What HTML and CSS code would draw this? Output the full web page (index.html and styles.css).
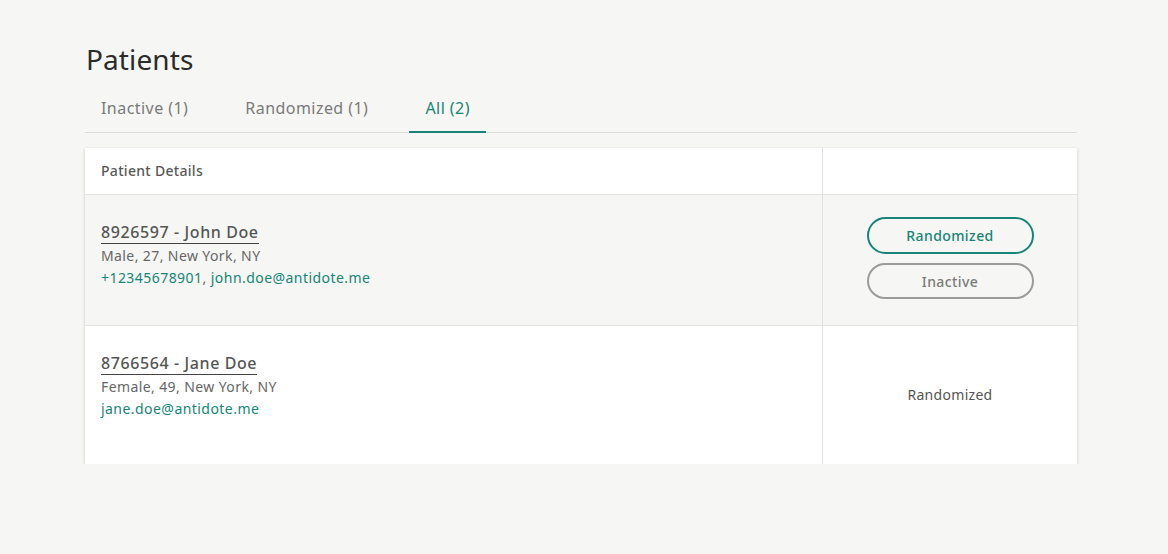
FILE: index.html
```html
<!DOCTYPE html>
<html>
<head>
<meta charset="utf-8">
<link rel="stylesheet" href="styles.css">
</head>
<body>
<main class="page">
  <h1 class="title">Patients</h1>
  <nav class="tabs">
    <a class="tab">Inactive (1)</a>
    <a class="tab">Randomized (1)</a>
    <a class="tab active">All (2)</a>
  </nav>
  <section class="card">
    <div class="row head">
      <div class="cell main">Patient Details</div>
      <div class="cell side"></div>
    </div>
    <div class="row r1 highlighted">
      <div class="cell main">
        <a class="name">8926597 - John Doe</a>
        <div class="meta">Male, 27, New York, NY</div>
        <div class="contact"><span class="link">+12345678901</span>, <span class="link">john.doe@antidote.me</span></div>
      </div>
      <div class="cell side buttons">
        <button class="pill primary">Randomized</button>
        <button class="pill secondary">Inactive</button>
      </div>
    </div>
    <div class="row r2">
      <div class="cell main">
        <a class="name">8766564 - Jane Doe</a>
        <div class="meta">Female, 49, New York, NY</div>
        <div class="contact"><span class="link">jane.doe@antidote.me</span></div>
      </div>
      <div class="cell side status">Randomized</div>
    </div>
  </section>
</main>
</body>
</html>
```
FILE: styles.css
```css
html, body {
  margin: 0;
  padding: 0;
  background: #f6f6f4;
  font-family: "Noto Sans", sans-serif;
  color: #555;
}
.page {
  width: 992px;
  margin-left: 85px;
  padding-top: 40px;
}
.title {
  margin: 0 0 0 1px;
  font-size: 28px;
  font-weight: 400;
  color: #2b2b2b;
  line-height: 38px;
  letter-spacing: 0.1px;
}
.tabs {
  display: flex;
  margin-top: 13px;
  border-bottom: 1px solid #dcdcda;
  height: 41px;
}
.tab {
  display: block;
  font-size: 16px;
  letter-spacing: 0.45px;
  color: #7a7a7a;
  padding: 0 16px;
  margin-right: 25px;
  line-height: 26px;
  padding-top: 4px;
  box-sizing: border-box;
  height: 41px;
}
.tab.active {
  color: #168577;
  border-bottom: 2px solid #168577;
  height: 42px;
}
.card {
  margin-top: 15px;
  background: #fff;
  box-shadow: 0 1px 3px rgba(0,0,0,0.2);
}
.row {
  display: flex;
  border-bottom: 1px solid #e2e2e0;
}
.row:last-child { border-bottom: none; }
.cell { box-sizing: border-box; }
.cell.main {
  width: 738px;
  border-right: 1px solid #e2e2e0;
  padding-left: 16px;
}
.cell.side { flex: 1; }
.head { height: 46px; }
.head .main {
  font-size: 14px;
  font-weight: 500;
  color: #585858;
  padding-top: 13px;
  letter-spacing: 0.3px;
}
.highlighted { background: #f6f6f4; }
.r1 { height: 130px; }
.r2 { height: 138px; }
.r1 .main { padding-top: 26px; }
.r2 .main { padding-top: 26px; }
.name {
  display: inline-block;
  font-size: 16px;
  font-weight: 500;
  color: #555;
  line-height: 21px;
  letter-spacing: 0.6px;
  border-bottom: 1px solid #444;
  margin-bottom: 1px;
}
.meta {
  font-size: 14px;
  color: #666;
  line-height: 22px;
  letter-spacing: 0.4px;
}
.contact {
  font-size: 14px;
  color: #666;
  line-height: 22px;
  letter-spacing: 0.45px;
}
.link { color: #168577; }
.buttons {
  display: flex;
  flex-direction: column;
  align-items: center;
  padding-top: 22px;
  gap: 9px;
}
.pill {
  width: 167px;
  height: 37px;
  border-radius: 19px;
  background: transparent;
  font-family: inherit;
  font-size: 14px;
  font-weight: 500;
  letter-spacing: 0.4px;
  box-sizing: border-box;
}
.pill.primary {
  border: 2px solid #168577;
  color: #168577;
}
.pill.secondary {
  border: 2px solid #9b9b9b;
  color: #7a7a7a;
  height: 36px;
}
.status {
  display: flex;
  align-items: center;
  justify-content: center;
  font-size: 14px;
  color: #555;
  letter-spacing: 0.3px;
  padding-bottom: 2px;
}
```
